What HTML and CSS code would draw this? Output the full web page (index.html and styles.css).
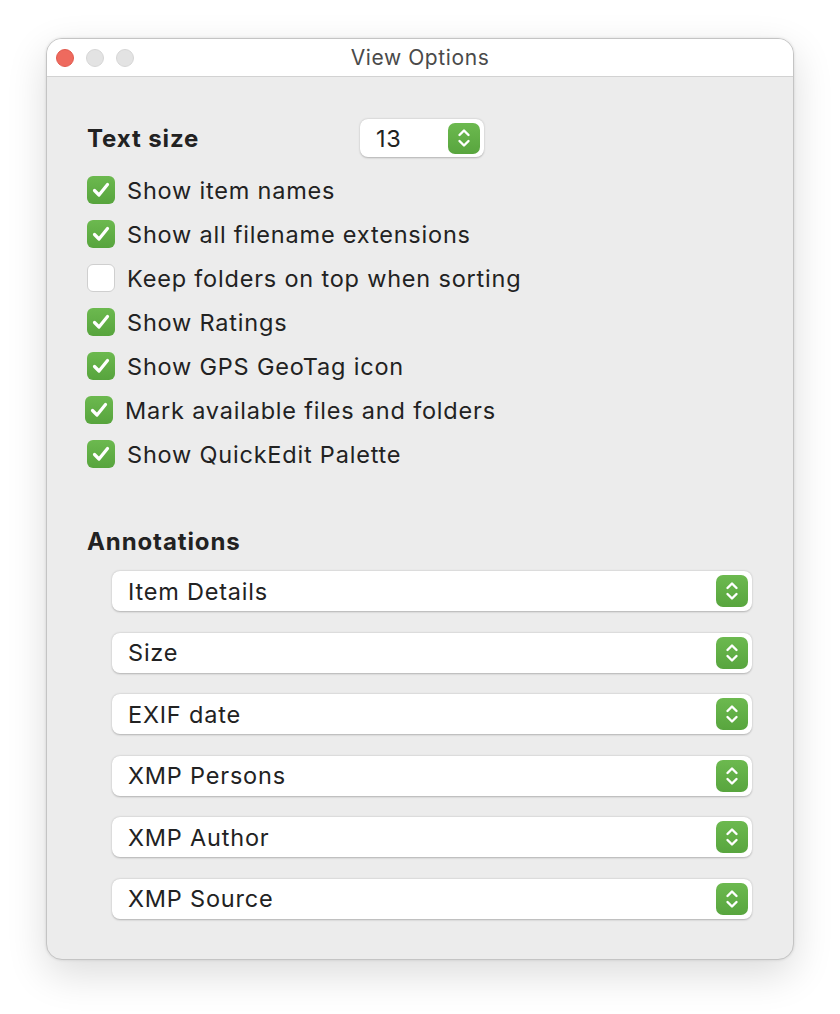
FILE: index.html
```html
<!DOCTYPE html>
<html>
<head>
<meta charset="utf-8">
<link rel="stylesheet" href="styles.css">
</head>
<body>
<div class="window">
  <div class="titlebar">
    <div class="lights">
      <span class="light red"></span>
      <span class="light"></span>
      <span class="light"></span>
    </div>
    <div class="title">View Options</div>
  </div>
  <div class="content">
    <div class="size-row">
      <div class="label-bold size-label">Text size</div>
      <div class="stepper">
        <span class="stepper-val">13</span>
        <span class="updown">
          <svg viewBox="0 0 32 32" width="32" height="32"><path d="M11.5 13 L16 8.5 L20.5 13 M11.5 19 L16 23.5 L20.5 19" fill="none" stroke="#fff" stroke-width="2.4" stroke-linecap="round" stroke-linejoin="round"/></svg>
        </span>
      </div>
    </div>
    <div class="checks">
      <div class="check-row"><span class="box on"><svg viewBox="0 0 28 28" width="28" height="28"><path d="M7.5 14.5 L12 19 L20.5 8.5" fill="none" stroke="#fff" stroke-width="3.2" stroke-linecap="round" stroke-linejoin="round"/></svg></span><span>Show item names</span></div>
      <div class="check-row"><span class="box on"><svg viewBox="0 0 28 28" width="28" height="28"><path d="M7.5 14.5 L12 19 L20.5 8.5" fill="none" stroke="#fff" stroke-width="3.2" stroke-linecap="round" stroke-linejoin="round"/></svg></span><span>Show all filename extensions</span></div>
      <div class="check-row"><span class="box"></span><span>Keep folders on top when sorting</span></div>
      <div class="check-row"><span class="box on"><svg viewBox="0 0 28 28" width="28" height="28"><path d="M7.5 14.5 L12 19 L20.5 8.5" fill="none" stroke="#fff" stroke-width="3.2" stroke-linecap="round" stroke-linejoin="round"/></svg></span><span>Show Ratings</span></div>
      <div class="check-row"><span class="box on"><svg viewBox="0 0 28 28" width="28" height="28"><path d="M7.5 14.5 L12 19 L20.5 8.5" fill="none" stroke="#fff" stroke-width="3.2" stroke-linecap="round" stroke-linejoin="round"/></svg></span><span>Show GPS GeoTag icon</span></div>
      <div class="check-row shifted"><span class="box on"><svg viewBox="0 0 28 28" width="28" height="28"><path d="M7.5 14.5 L12 19 L20.5 8.5" fill="none" stroke="#fff" stroke-width="3.2" stroke-linecap="round" stroke-linejoin="round"/></svg></span><span>Mark available files and folders</span></div>
      <div class="check-row"><span class="box on"><svg viewBox="0 0 28 28" width="28" height="28"><path d="M7.5 14.5 L12 19 L20.5 8.5" fill="none" stroke="#fff" stroke-width="3.2" stroke-linecap="round" stroke-linejoin="round"/></svg></span><span>Show QuickEdit Palette</span></div>
    </div>
    <div class="label-bold annot">Annotations</div>
    <div class="selects">
      <div class="select"><span>Item Details</span><span class="updown"><svg viewBox="0 0 32 32" width="32" height="32"><path d="M11.5 13 L16 8.5 L20.5 13 M11.5 19 L16 23.5 L20.5 19" fill="none" stroke="#fff" stroke-width="2.4" stroke-linecap="round" stroke-linejoin="round"/></svg></span></div>
      <div class="select"><span>Size</span><span class="updown"><svg viewBox="0 0 32 32" width="32" height="32"><path d="M11.5 13 L16 8.5 L20.5 13 M11.5 19 L16 23.5 L20.5 19" fill="none" stroke="#fff" stroke-width="2.4" stroke-linecap="round" stroke-linejoin="round"/></svg></span></div>
      <div class="select"><span>EXIF date</span><span class="updown"><svg viewBox="0 0 32 32" width="32" height="32"><path d="M11.5 13 L16 8.5 L20.5 13 M11.5 19 L16 23.5 L20.5 19" fill="none" stroke="#fff" stroke-width="2.4" stroke-linecap="round" stroke-linejoin="round"/></svg></span></div>
      <div class="select"><span>XMP Persons</span><span class="updown"><svg viewBox="0 0 32 32" width="32" height="32"><path d="M11.5 13 L16 8.5 L20.5 13 M11.5 19 L16 23.5 L20.5 19" fill="none" stroke="#fff" stroke-width="2.4" stroke-linecap="round" stroke-linejoin="round"/></svg></span></div>
      <div class="select"><span>XMP Author</span><span class="updown"><svg viewBox="0 0 32 32" width="32" height="32"><path d="M11.5 13 L16 8.5 L20.5 13 M11.5 19 L16 23.5 L20.5 19" fill="none" stroke="#fff" stroke-width="2.4" stroke-linecap="round" stroke-linejoin="round"/></svg></span></div>
      <div class="select"><span>XMP Source</span><span class="updown"><svg viewBox="0 0 32 32" width="32" height="32"><path d="M11.5 13 L16 8.5 L20.5 13 M11.5 19 L16 23.5 L20.5 19" fill="none" stroke="#fff" stroke-width="2.4" stroke-linecap="round" stroke-linejoin="round"/></svg></span></div>
    </div>
  </div>
</div>
</body>
</html>
```

FILE: styles.css
```css
* { box-sizing: border-box; }
html, body { margin: 0; padding: 0; background: #fff; }
body {
  font-family: "Inter", "Liberation Sans", sans-serif;
  color: #222;
  padding: 38px 0 0 46px;
  min-height: 1014px;
}
.window {
  width: 748px;
  height: 922px;
  background: #ececec;
  border-radius: 16px;
  border: 1px solid #c4c4c4;
  box-shadow: 0 14px 40px rgba(0,0,0,0.14), 0 0 3px rgba(0,0,0,0.12);
  overflow: hidden;
}
.titlebar {
  height: 38px;
  background: #fff;
  border-bottom: 1px solid #d2d2d2;
  display: flex;
  align-items: center;
  position: relative;
}
.lights {
  display: flex;
  gap: 12px;
  padding-left: 9px;
}
.light {
  width: 18px;
  height: 18px;
  border-radius: 50%;
  background: #e3e3e3;
  border: 1px solid #d6d6d6;
}
.light.red { background: #ee6a5e; border-color: #e05a4e; }
.title {
  position: absolute;
  left: 0; right: 0;
  text-align: center;
  font-size: 21px;
  letter-spacing: 0.6px;
  color: #4a4a4a;
  top: 6px;
}
.content {
  padding: 42px 0 0 40px;
}
.size-row {
  display: flex;
  align-items: center;
  height: 38px;
}
.label-bold {
  font-weight: 700;
  font-size: 24px;
  letter-spacing: 0.9px;
  color: #222;
}
.size-label { width: 273px; }
.stepper {
  width: 124px;
  height: 38px;
  background: #fff;
  border-radius: 8px;
  box-shadow: 0 0.5px 2px rgba(0,0,0,0.25);
  display: flex;
  align-items: center;
  justify-content: space-between;
  padding: 0 4px 0 16px;
}
.stepper-val { font-size: 23.5px; letter-spacing: 0.8px; }
.updown {
  width: 32px;
  height: 31px;
  border-radius: 7px;
  background: linear-gradient(#6cb94f, #58a53e);
  display: flex;
  align-items: center;
  justify-content: center;
}
.updown svg { display: block; }
.checks {
  margin-top: 11px;
  display: flex;
  flex-direction: column;
}
.check-row {
  height: 44px;
  display: flex;
  align-items: center;
  gap: 12px;
  font-size: 23.5px;
  letter-spacing: 0.8px;
}
.check-row.shifted { margin-left: -2px; }
.box {
  width: 28px;
  height: 28px;
  border-radius: 6px;
  background: #fff;
  border: 1px solid #cfcfcf;
  flex: none;
  display: flex;
}
.box.on {
  background: linear-gradient(#6cb94f, #57a43d);
  border: none;
}
.annot {
  margin-top: 50px;
  height: 30px;
  display: flex;
  align-items: center;
}
.selects {
  margin-top: 15px;
  margin-left: 25px;
  width: 640px;
  display: flex;
  flex-direction: column;
  gap: 21.6px;
}
.select {
  height: 40px;
  background: #fff;
  border-radius: 8px;
  box-shadow: 0 0.5px 2px rgba(0,0,0,0.25);
  display: flex;
  align-items: center;
  justify-content: space-between;
  padding: 0 4px 0 16px;
  font-size: 23.5px;
  letter-spacing: 0.8px;
}
.select .updown { height: 32px; }
```
